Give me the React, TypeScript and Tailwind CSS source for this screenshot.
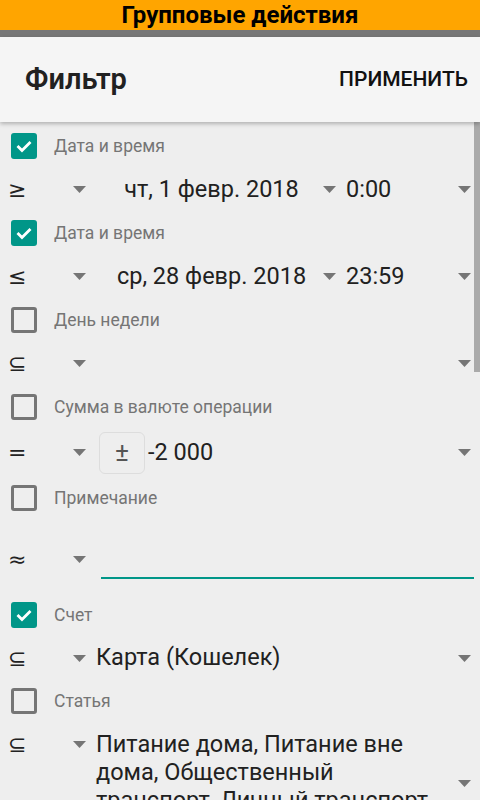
import React from "react";

const Tri = () => (
  <svg width="13" height="7" viewBox="0 0 13 7" className="shrink-0">
    <polygon points="0,0 13,0 6.5,7" fill="#757575" />
  </svg>
);

const Check = ({ checked }: { checked: boolean }) =>
  checked ? (
    <div className="w-[26px] h-[26px] rounded-[3px] bg-[#009688] flex items-center justify-center shrink-0">
      <svg width="20" height="20" viewBox="0 0 20 20">
        <path d="M3.5 10 L8 14.5 L16.5 6" stroke="#fff" strokeWidth="2.8" fill="none" />
      </svg>
    </div>
  ) : (
    <div className="w-[26px] h-[26px] rounded-[3px] border-[3px] border-[#757575] shrink-0" />
  );

const Label = ({ checked, text }: { checked: boolean; text: string }) => (
  <div className="h-[40px] flex items-center pl-[11px]">
    <Check checked={checked} />
    <span className="ml-[17px] text-[17.5px] text-[#757575]">{text}</span>
  </div>
);

const Op = ({ sym }: { sym: string }) => (
  <div className="w-[90px] shrink-0 flex items-center self-stretch">
    <span className="pl-[8px] text-[22px] text-[#222] w-[40px]" style={{ fontFamily: "'DejaVu Sans', sans-serif" }}>{sym}</span>
    <div className="ml-auto mr-[4px]">
      <Tri />
    </div>
  </div>
);

export default function App() {
  return (
    <div className="relative w-[480px] h-[800px] overflow-hidden bg-[#eeeeee]" style={{ fontFamily: "Roboto, sans-serif" }}>
      <div className="h-[30px] bg-[#ffa500] flex items-center justify-center">
        <span className="text-[24px] font-bold text-black leading-none">Групповые действия</span>
      </div>
      <div className="h-[7px] bg-[#777777]" />
      <div className="relative z-10 h-[85px] bg-[#f5f5f5] flex items-center justify-between pl-[25px] pr-[12px] shadow-[0_2px_4px_rgba(0,0,0,0.25)]">
        <span className="text-[29px] font-semibold text-[#212121]">Фильтр</span>
        <span className="text-[21px] font-medium text-[#111]">ПРИМЕНИТЬ</span>
      </div>
      <div className="absolute right-0 top-[122px] w-[6px] h-[250px] bg-[#aaaaaa]" />

      <div className="pt-[4px] pr-[6px] text-[#212121]">
        {/* group 1 */}
        <Label checked text="Дата и время" />
        <div className="h-[47px] flex items-center">
          <Op sym="≥" />
          <div className="flex-1 flex items-center">
            <span className="flex-1 text-center text-[23.5px] pl-[10px]">чт, 1 февр. 2018</span>
            <div className="mr-[10px]"><Tri /></div>
          </div>
          <div className="w-[128px] flex items-center">
            <span className="text-[23.5px] flex-1">0:00</span>
            <div className="mr-[3px]"><Tri /></div>
          </div>
        </div>
        {/* group 2 */}
        <Label checked text="Дата и время" />
        <div className="h-[47px] flex items-center">
          <Op sym="≤" />
          <div className="flex-1 flex items-center">
            <span className="flex-1 text-center text-[23.5px] pl-[10px]">ср, 28 февр. 2018</span>
            <div className="mr-[10px]"><Tri /></div>
          </div>
          <div className="w-[128px] flex items-center">
            <span className="text-[23.5px] flex-1">23:59</span>
            <div className="mr-[3px]"><Tri /></div>
          </div>
        </div>
        {/* group 3 */}
        <Label checked={false} text="День недели" />
        <div className="h-[47px] flex items-center">
          <Op sym="⊆" />
          <div className="flex-1" />
          <div className="mr-[3px]"><Tri /></div>
        </div>
        {/* group 4 */}
        <Label checked={false} text="Сумма в валюте операции" />
        <div className="h-[51px] flex items-center">
          <Op sym="=" />
          <div className="ml-[9px] w-[46px] h-[42px] rounded-[6px] border border-[#dddddd] flex items-center justify-center text-[26px] text-[#555]">±</div>
          <span className="ml-[3px] text-[23.5px] flex-1">-2 000</span>
          <div className="mr-[3px]"><Tri /></div>
        </div>
        {/* group 5 */}
        <Label checked={false} text="Примечание" />
        <div className="h-[77px] flex items-start">
          <div className="h-[82px] flex">
            <Op sym="≈" />
          </div>
          <div className="ml-[11px] flex-1 h-[61px] border-b-[2px] border-[#009688]" />
        </div>
        {/* group 6 */}
        <Label checked text="Счет" />
        <div className="h-[46px] flex items-center">
          <Op sym="⊆" />
          <span className="ml-[6px] text-[23.5px] flex-1">Карта (Кошелек)</span>
          <div className="mr-[3px]"><Tri /></div>
        </div>
        {/* group 7 */}
        <Label checked={false} text="Статья" />
        <div className="flex items-start pt-[9px]">
          <div className="h-[28px] flex">
            <Op sym="⊆" />
          </div>
          <span className="ml-[6px] text-[23.5px] leading-[28px] w-[355px]">
            Питание дома, Питание вне дома, Общественный транспорт, Личный транспорт
          </span>
          <div className="ml-auto mr-[3px] mt-[50px]"><Tri /></div>
        </div>
      </div>
    </div>
  );
}
